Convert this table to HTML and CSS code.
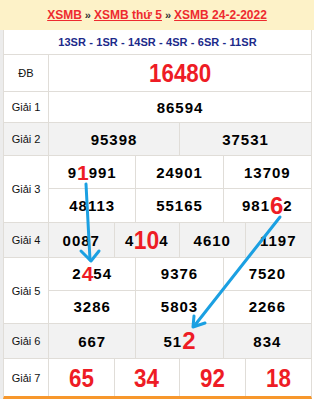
FILE: index.html
```html
<!DOCTYPE html>
<html lang="vi">
<head>
<meta charset="utf-8">
<title>XSMB 24-2-2022</title>
<link rel="stylesheet" href="styles.css">
</head>
<body>
<div class="page">
  <div class="head">
    <a href="#">XSMB</a> <span class="sep">»</span> <a href="#">XSMB thứ 5</a> <span class="sep">»</span> <a href="#">XSMB 24-2-2022</a>
  </div>
  <div class="board">
    <div class="codes">13SR - 1SR - 14SR - 4SR - 6SR - 11SR</div>
    <div class="row r-db">
      <div class="label">ĐB</div>
      <div class="cells"><div class="cell"><span class="special">16480</span></div></div>
    </div>
    <div class="row r-g1">
      <div class="label">Giải 1</div>
      <div class="cells"><div class="cell num">86594</div></div>
    </div>
    <div class="row r-g2 alt">
      <div class="label">Giải 2</div>
      <div class="cells cols-2"><div class="cell num">95398</div><div class="cell num">37531</div></div>
    </div>
    <div class="row r-g3">
      <div class="label">Giải 3</div>
      <div class="cells cols-3 rows-2">
        <div class="cell num top">9<span class="hit h1">1</span>991</div>
        <div class="cell num top">24901</div>
        <div class="cell num top">13709</div>
        <div class="cell num">48113</div>
        <div class="cell num">55165</div>
        <div class="cell num">981<span class="hit h6">6</span>2</div>
      </div>
    </div>
    <div class="row r-g4 alt">
      <div class="label">Giải 4</div>
      <div class="cells cols-4">
        <div class="cell num">0087</div>
        <div class="cell num">4<span class="hit h10">10</span>4</div>
        <div class="cell num">4610</div>
        <div class="cell num">1197</div>
      </div>
    </div>
    <div class="row r-g5">
      <div class="label">Giải 5</div>
      <div class="cells cols-3 rows-2">
        <div class="cell num top">2<span class="hit h4">4</span>54</div>
        <div class="cell num top">9376</div>
        <div class="cell num top">7520</div>
        <div class="cell num">3286</div>
        <div class="cell num">5803</div>
        <div class="cell num">2266</div>
      </div>
    </div>
    <div class="row r-g6 alt">
      <div class="label">Giải 6</div>
      <div class="cells cols-3">
        <div class="cell num">667</div>
        <div class="cell num">51<span class="hit h2">2</span></div>
        <div class="cell num">834</div>
      </div>
    </div>
    <div class="row r-g7">
      <div class="label">Giải 7</div>
      <div class="cells cols-4">
        <div class="cell"><span class="red">65</span></div>
        <div class="cell"><span class="red">34</span></div>
        <div class="cell"><span class="red">92</span></div>
        <div class="cell"><span class="red">18</span></div>
      </div>
    </div>
  </div>
  <svg class="arrows" width="314" height="399" viewBox="0 0 314 399" aria-hidden="true">
    <g fill="none" stroke="#1ba0e2" stroke-width="3" stroke-linecap="round" stroke-linejoin="round">
      <path d="M86 184 L90 260"/>
      <path d="M81 251 L91 261 L99 251"/>
      <path d="M280 217 L195 325"/>
      <path d="M194 316 L193 327 L205 323"/>
    </g>
  </svg>
</div>
</body>
</html>
```
FILE: styles.css
```css
* { box-sizing: border-box; }
html, body { margin: 0; padding: 0; background: #fff; }
body { font-family: "Liberation Sans", Arial, sans-serif; color: #000; }

.page { position: relative; width: 314px; height: 399px; overflow: hidden; }

.head {
  height: 30px;
  background: #fdf2c8;
  display: flex;
  align-items: center;
  justify-content: center;
  gap: 3px;
  font-size: 12px;
  font-weight: bold;
  padding-bottom: 1px;
}
.head a { color: #ee2a2f; text-decoration: underline; }
.head .sep { color: #333; font-size: 11px; }

.board {
  width: 312px;
  border-left: 3px solid #ececec;
}
.board > * {
  border-left: 1px solid #e0ddd8;
  border-right: 1px solid #e0ddd8;
  border-bottom: 1px solid #e0ddd8;
}

.codes {
  height: 25px;
  display: flex;
  align-items: center;
  justify-content: center;
  color: #1c2a8a;
  font-size: 11px;
  font-weight: bold;
  letter-spacing: 0.1px;
}

.row { display: flex; }
.row.alt { background: #f2f2f2; }
.r-db { height: 37px; }
.r-g1 { height: 31px; }
.r-g2 { height: 33px; }
.r-g3 { height: 67px; }
.r-g4 { height: 35px; }
.r-g5 { height: 66px; }
.r-g6 { height: 35px; }
.board > .r-g7 { height: 40px; border-bottom: 3px solid #f7972c; }

.label {
  width: 45px;
  flex: none;
  border-right: 1px solid #e0ddd8;
  display: flex;
  align-items: center;
  justify-content: center;
  font-size: 11px;
  color: #111;
}

.cells { flex: 1; display: grid; grid-template-columns: 1fr; }
.cols-2 { grid-template-columns: 1fr 1fr; }
.cols-3 { grid-template-columns: 1fr 1fr 1fr; }
.cols-4 { grid-template-columns: 1fr 1fr 1fr 1fr; }
.rows-2 { grid-template-rows: 1fr 1fr; }

.cell {
  display: flex;
  align-items: center;
  justify-content: center;
  border-right: 1px solid #e0ddd8;
  min-width: 0;
}
.cols-2 .cell:nth-child(2n),
.cols-3 .cell:nth-child(3n),
.cols-4 .cell:nth-child(4n),
.cells > .cell:only-child { border-right: none; }
.cell.top { border-bottom: 1px solid #e0ddd8; }

.num {
  font-size: 15px;
  font-weight: bold;
  letter-spacing: 1px;
  line-height: 1;
}

.special, .red, .hit {
  font-family: "Liberation Sans", Arial, sans-serif;
  font-weight: bold;
  color: #ee1c25;
  letter-spacing: 0;
  line-height: 1;
}
.special, .red {
  display: inline-block;
  font-size: 26px;
  transform: scaleX(0.86);
}
.hit { font-size: 21px; }
.hit.h10 { font-size: 26px; display: inline-block; transform: scaleX(0.88); margin: 0 -2px; }
.hit.h6, .hit.h2 { font-size: 24px; }

.arrows { position: absolute; left: 0; top: 0; pointer-events: none; }
```
